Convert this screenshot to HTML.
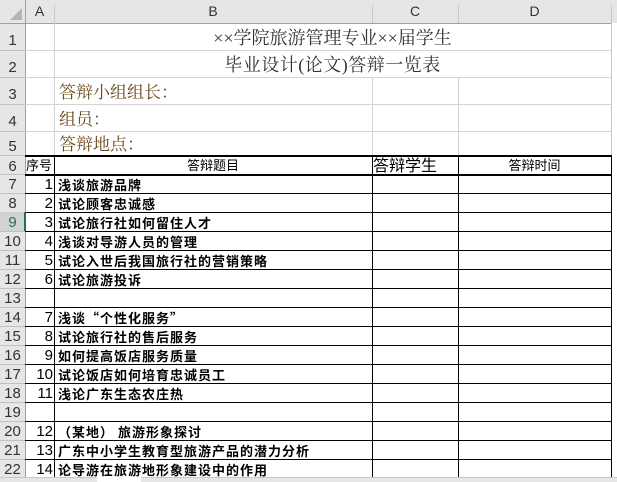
<!DOCTYPE html>
<html><head><meta charset="utf-8"><style>
*{margin:0;padding:0;box-sizing:border-box}
body{width:617px;height:482px;overflow:hidden;background:#fff;position:relative;font-family:"Liberation Sans","Noto Sans CJK SC",sans-serif}
.a{position:absolute}
.hl{position:absolute;height:1px}
.vl{position:absolute;width:1px}
.rn{position:absolute;left:0;width:25px;text-align:center;font-size:15px;color:#333;line-height:19px;font-family:"Liberation Sans Narrow","Liberation Sans",sans-serif}
.num{position:absolute;left:25px;width:28px;text-align:right;font-size:15px;color:#000;line-height:19px}
.t{position:absolute;left:58px;font-size:13px;font-weight:bold;color:#000;line-height:19px;top:1px;font-family:"Noto Sans CJK SC",sans-serif;letter-spacing:1px}
.ser{font-family:"Liberation Serif","Noto Serif CJK SC","Noto Sans CJK SC",serif}
</style></head><body>
<div class="a" style="left:0;top:0;width:617px;height:23px;background:#e6e6e6"></div>
<div class="a" style="left:0;top:0;width:25px;height:482px;background:#e6e6e6"></div>
<div class="a" style="left:10px;top:8px;width:0;height:0;border-left:12px solid transparent;border-bottom:12px solid #b5b5b5"></div>
<div class="hl" style="left:0;top:23px;width:611px;background:#a0a0a0"></div>
<div class="vl" style="left:25px;top:0;height:477px;background:#a0a0a0"></div>
<div class="vl" style="left:54px;top:5px;height:18px;background:#c8c8c8"></div>
<div class="vl" style="left:372px;top:5px;height:18px;background:#c8c8c8"></div>
<div class="vl" style="left:458px;top:5px;height:18px;background:#c8c8c8"></div>
<div class="vl" style="left:611px;top:5px;height:472px;background:#c8c8c8"></div>
<div class="a" style="left:25px;top:3px;width:29px;text-align:center;font-size:14px;color:#333">A</div>
<div class="a" style="left:54px;top:3px;width:318px;text-align:center;font-size:14px;color:#333">B</div>
<div class="a" style="left:372px;top:3px;width:86px;text-align:center;font-size:14px;color:#333">C</div>
<div class="a" style="left:458px;top:3px;width:153px;text-align:center;font-size:14px;color:#333">D</div>
<div class="hl" style="left:25px;top:50px;width:586px;background:#d4d4d4"></div>
<div class="hl" style="left:25px;top:77px;width:586px;background:#d4d4d4"></div>
<div class="hl" style="left:25px;top:104px;width:586px;background:#d4d4d4"></div>
<div class="hl" style="left:25px;top:131px;width:586px;background:#d4d4d4"></div>
<div class="vl" style="left:54px;top:23px;height:132px;background:#d4d4d4"></div>
<div class="vl" style="left:372px;top:77px;height:78px;background:#d4d4d4"></div>
<div class="vl" style="left:458px;top:77px;height:78px;background:#d4d4d4"></div>
<div class="hl" style="left:0;top:50px;width:25px;background:#c0c0c0"></div>
<div class="hl" style="left:0;top:77px;width:25px;background:#c0c0c0"></div>
<div class="hl" style="left:0;top:104px;width:25px;background:#c0c0c0"></div>
<div class="hl" style="left:0;top:131px;width:25px;background:#c0c0c0"></div>
<div class="rn" style="top:31px">1</div>
<div class="rn" style="top:58px">2</div>
<div class="rn" style="top:85px">3</div>
<div class="rn" style="top:112px">4</div>
<div class="rn" style="top:137px">5</div>
<div class="a ser" style="left:54px;top:25px;width:557px;text-align:center;font-size:18px;line-height:26px;color:#333">××学院旅游管理专业××届学生</div>
<div class="a ser" style="left:54px;top:52px;width:557px;text-align:center;font-size:18px;line-height:26px;color:#333;letter-spacing:0.5px">毕业设计(论文)答辩一览表</div>
<div class="a ser" style="left:59px;top:80px;font-size:17px;line-height:26px;color:#6b4a1e">答辩小组组长：</div>
<div class="a ser" style="left:59px;top:107px;font-size:17px;line-height:26px;color:#6b4a1e">组员：</div>
<div class="a ser" style="left:59px;top:132px;font-size:17px;line-height:26px;color:#6b4a1e">答辩地点：</div>
<div class="hl" style="left:25px;top:155px;width:587px;background:#000;height:2px"></div>
<div class="rn" style="top:157px">6</div>
<div class="a" style="left:26px;top:156px;font-size:13px;line-height:19px">序号</div>
<div class="a" style="left:54px;top:156px;width:318px;text-align:center;font-size:13px;line-height:19px">答辩题目</div>
<div class="a" style="left:373px;top:156px;font-size:16px;line-height:22px">答辩学生</div>
<div class="a" style="left:458px;top:156px;width:153px;text-align:center;font-size:13px;line-height:19px">答辩时间</div>
<div class="vl" style="left:54px;top:155px;height:322px;background:#000"></div>
<div class="vl" style="left:372px;top:155px;height:322px;background:#000"></div>
<div class="vl" style="left:458px;top:155px;height:322px;background:#000"></div>
<div class="vl" style="left:611px;top:155px;height:322px;background:#000"></div>
<div class="hl" style="left:25px;top:174px;width:587px;background:#000;height:2px"></div>
<div class="hl" style="left:25px;top:193px;width:587px;background:#000"></div>
<div class="hl" style="left:25px;top:212px;width:587px;background:#000"></div>
<div class="hl" style="left:25px;top:231px;width:587px;background:#000"></div>
<div class="hl" style="left:25px;top:250px;width:587px;background:#000"></div>
<div class="hl" style="left:25px;top:269px;width:587px;background:#000"></div>
<div class="hl" style="left:25px;top:288px;width:587px;background:#000"></div>
<div class="hl" style="left:25px;top:307px;width:587px;background:#000"></div>
<div class="hl" style="left:25px;top:326px;width:587px;background:#000"></div>
<div class="hl" style="left:25px;top:345px;width:587px;background:#000"></div>
<div class="hl" style="left:25px;top:364px;width:587px;background:#000"></div>
<div class="hl" style="left:25px;top:383px;width:587px;background:#000"></div>
<div class="hl" style="left:25px;top:402px;width:587px;background:#000"></div>
<div class="hl" style="left:25px;top:421px;width:587px;background:#000"></div>
<div class="hl" style="left:25px;top:440px;width:587px;background:#000"></div>
<div class="hl" style="left:25px;top:459px;width:587px;background:#000"></div>
<div class="hl" style="left:0;top:155px;width:25px;background:#c0c0c0"></div>
<div class="hl" style="left:0;top:174px;width:25px;background:#c0c0c0"></div>
<div class="hl" style="left:0;top:193px;width:25px;background:#c0c0c0"></div>
<div class="hl" style="left:0;top:212px;width:25px;background:#c0c0c0"></div>
<div class="hl" style="left:0;top:231px;width:25px;background:#c0c0c0"></div>
<div class="hl" style="left:0;top:250px;width:25px;background:#c0c0c0"></div>
<div class="hl" style="left:0;top:269px;width:25px;background:#c0c0c0"></div>
<div class="hl" style="left:0;top:288px;width:25px;background:#c0c0c0"></div>
<div class="hl" style="left:0;top:307px;width:25px;background:#c0c0c0"></div>
<div class="hl" style="left:0;top:326px;width:25px;background:#c0c0c0"></div>
<div class="hl" style="left:0;top:345px;width:25px;background:#c0c0c0"></div>
<div class="hl" style="left:0;top:364px;width:25px;background:#c0c0c0"></div>
<div class="hl" style="left:0;top:383px;width:25px;background:#c0c0c0"></div>
<div class="hl" style="left:0;top:402px;width:25px;background:#c0c0c0"></div>
<div class="hl" style="left:0;top:421px;width:25px;background:#c0c0c0"></div>
<div class="hl" style="left:0;top:440px;width:25px;background:#c0c0c0"></div>
<div class="hl" style="left:0;top:459px;width:25px;background:#c0c0c0"></div>
<div class="a" style="left:0;top:212px;width:25px;height:19px;background:#d2d2d2"></div>
<div class="a" style="left:24px;top:212px;width:2px;height:19px;background:#217346"></div>

<div class="rn" style="top:175px">7</div><div class="num" style="top:175px">1</div><div class="t" style="top:175px">浅谈旅游品牌</div>
<div class="rn" style="top:194px">8</div><div class="num" style="top:194px">2</div><div class="t" style="top:194px">试论顾客忠诚感</div>
<div class="rn" style="top:213px;color:#217346">9</div><div class="num" style="top:213px">3</div><div class="t" style="top:213px">试论旅行社如何留住人才</div>
<div class="rn" style="top:232px">10</div><div class="num" style="top:232px">4</div><div class="t" style="top:232px">浅谈对导游人员的管理</div>
<div class="rn" style="top:251px">11</div><div class="num" style="top:251px">5</div><div class="t" style="top:251px">试论入世后我国旅行社的营销策略</div>
<div class="rn" style="top:270px">12</div><div class="num" style="top:270px">6</div><div class="t" style="top:270px">试论旅游投诉</div>
<div class="rn" style="top:289px">13</div>
<div class="rn" style="top:308px">14</div><div class="num" style="top:308px">7</div><div class="t" style="top:308px">浅谈“个性化服务”</div>
<div class="rn" style="top:327px">15</div><div class="num" style="top:327px">8</div><div class="t" style="top:327px">试论旅行社的售后服务</div>
<div class="rn" style="top:346px">16</div><div class="num" style="top:346px">9</div><div class="t" style="top:346px">如何提高饭店服务质量</div>
<div class="rn" style="top:365px">17</div><div class="num" style="top:365px">10</div><div class="t" style="top:365px">试论饭店如何培育忠诚员工</div>
<div class="rn" style="top:384px">18</div><div class="num" style="top:384px">11</div><div class="t" style="top:384px">浅论广东生态农庄热</div>
<div class="rn" style="top:403px">19</div>
<div class="rn" style="top:422px">20</div><div class="num" style="top:422px">12</div><div class="t" style="top:422px">（某地） 旅游形象探讨</div>
<div class="rn" style="top:441px">21</div><div class="num" style="top:441px">13</div><div class="t" style="top:441px">广东中小学生教育型旅游产品的潜力分析</div>
<div class="rn" style="top:460px">22</div><div class="num" style="top:460px">14</div><div class="t" style="top:460px">论导游在旅游地形象建设中的作用</div>
<div class="a" style="left:0;top:477px;width:617px;height:5px;background:#e6e6e6;border-top:1px solid #c8c8c8"></div>
<div class="a" style="left:97px;top:477px;width:44px;height:5px;background:#fff"></div>
</body></html>
